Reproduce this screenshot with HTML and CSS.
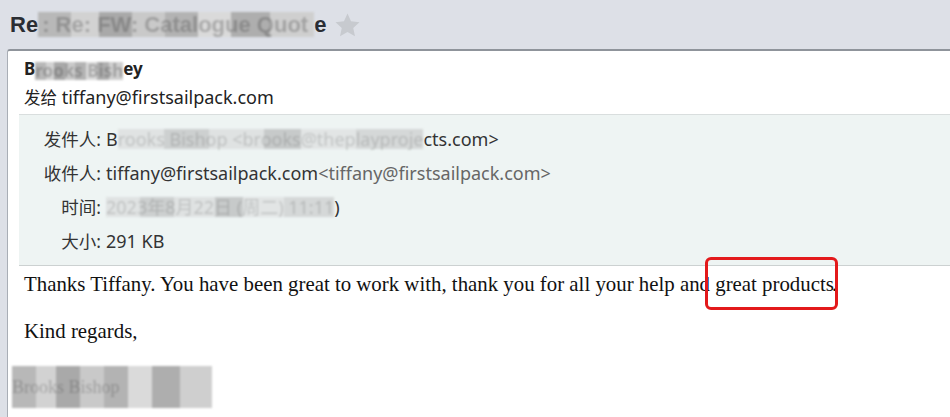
FILE: index.html
```html
<!DOCTYPE html>
<html lang="zh-CN">
<head>
    <meta charset="UTF-8">
    <meta name="viewport" content="width=device-width, initial-scale=1.0">
    <title>Re: Re: FW: Catalogue Quote</title>
    <link rel="stylesheet" href="styles.css">
</head>
<body>
    <div class="subject-bar">
        <h1 class="subject">Re<span class="mosaic">: Re: FW: Catalogue Quot</span>e</h1>
        <svg class="star" width="25" height="24" viewBox="0 0 24 23">
            <path d="M12 0.5l3.4 7.4 8.1 0.9-6 5.5 1.7 8-7.2-4.1-7.2 4.1 1.7-8-6-5.5 8.1-0.9z" fill="#c7cacf"/>
        </svg>
    </div>

    <div class="mail">
        <div class="mail-head">
            <div class="sender">B<span class="mosaic">rooks Bish</span>ey</div>
            <div class="to"><span class="cjk">发给</span> tiffany@firstsailpack.com</div>
        </div>

        <div class="meta">
            <span class="label">发件人:</span>
            <span class="value">B<span class="mosaic soft">rooks Bishop &lt;brooks@theplayproje</span>cts.com&gt;</span>

            <span class="label">收件人:</span>
            <span class="value">tiffany@firstsailpack.com<span class="addr">&lt;tiffany@firstsailpack.com&gt;</span></span>

            <span class="label">时间:</span>
            <span class="value"><span class="mosaic soft">2023年8月22日 (周二) 11:11</span>)</span>

            <span class="label">大小:</span>
            <span class="value">291 KB</span>
        </div>

        <div class="mail-body">
            <p>Thanks Tiffany. You have been great to work with, thank you for all your help and <span class="mark">great products</span>.</p>
            <p>Kind regards,</p>
            <p class="signature"><span class="mosaic">Brooks Bishop</span></p>
        </div>
    </div>
</body>
</html>
```

FILE: styles.css
```css
* {
    margin: 0;
    padding: 0;
    box-sizing: border-box;
}

body {
    font-family: "Noto Sans", "Noto Sans CJK SC", sans-serif;
    background-color: #dde0e7;
    color: #222;
    height: 417px;
    overflow: hidden;
    display: flex;
    flex-direction: column;
}

.subject-bar {
    flex-shrink: 0;
    height: 49px;
    display: flex;
    align-items: center;
    padding: 1px 0 0 10px;
    gap: 9px;
}

.subject {
    font-family: "Liberation Sans", sans-serif;
    font-size: 22px;
    font-weight: bold;
    color: #2a2d33;
}

.star {
    display: block;
}

.mosaic {
    color: rgba(60, 60, 60, 0.3);
    background: linear-gradient(90deg,
        #b8b8b8 0 12%, #d2d2d2 12% 22%, #a9a9a9 22% 34%, #c9c9c9 34% 46%,
        #b3b3b3 46% 58%, #dadada 58% 70%, #aeaeae 70% 84%, #cfcfcf 84% 100%);
    filter: blur(1px);
}

.subject .mosaic {
    padding: 0 6px 0 4px;
}

.mosaic.soft {
    background: linear-gradient(90deg,
        #e0e3e3 0 15%, #cdd0d0 15% 30%, #dfe2e2 30% 48%, #c7caca 48% 60%,
        #e2e5e5 60% 78%, #d5d8d8 78% 100%);
    color: rgba(60, 60, 60, 0.2);
}

.mail {
    flex: 1;
    margin-left: 7px;
    background: white;
    border-top: 2px solid #8f949b;
    border-left: 1px solid #a9aeb6;
    border-top-left-radius: 3px;
}

.mail-head {
    padding: 3px 16px 2px;
    line-height: 29px;
    font-size: 18px;
}

.cjk {
    font-size: 16.5px;
}

.sender {
    font-weight: bold;
    font-size: 17px;
}

.sender .mosaic {
    display: inline-block;
    line-height: 18px;
    vertical-align: -2px;
}

.meta {
    margin-left: 11px;
    background: #eef4f3;
    border-top: 1px solid #d9dede;
    border-bottom: 1px solid #ccd1d1;
    padding: 7px 0;
    display: grid;
    grid-template-columns: 82px 1fr;
    column-gap: 5px;
    font-size: 18px;
    line-height: 34px;
    color: #333;
}

.meta .label {
    font-size: 17.5px;
    text-align: right;
}

.meta .addr {
    color: #666;
}

.meta .mosaic {
    display: inline-block;
    line-height: 20px;
}

.mail-body {
    padding: 6px 16px;
    font-family: "Liberation Serif", serif;
    font-size: 20.85px;
    color: #111;
}

.mail-body p {
    line-height: 24px;
    margin-bottom: 23px;
}

.mark {
    outline: 3px solid #e3191b;
    border-radius: 3px;
    padding: 12px 1px 11px 7px;
    margin-left: -7px;
    margin-right: -3px;
}

.signature {
    margin-left: -12px;
}

.signature .mosaic {
    display: inline-block;
    width: 200px;
    height: 42px;
    line-height: 42px;
    font-size: 18px;
}
```
